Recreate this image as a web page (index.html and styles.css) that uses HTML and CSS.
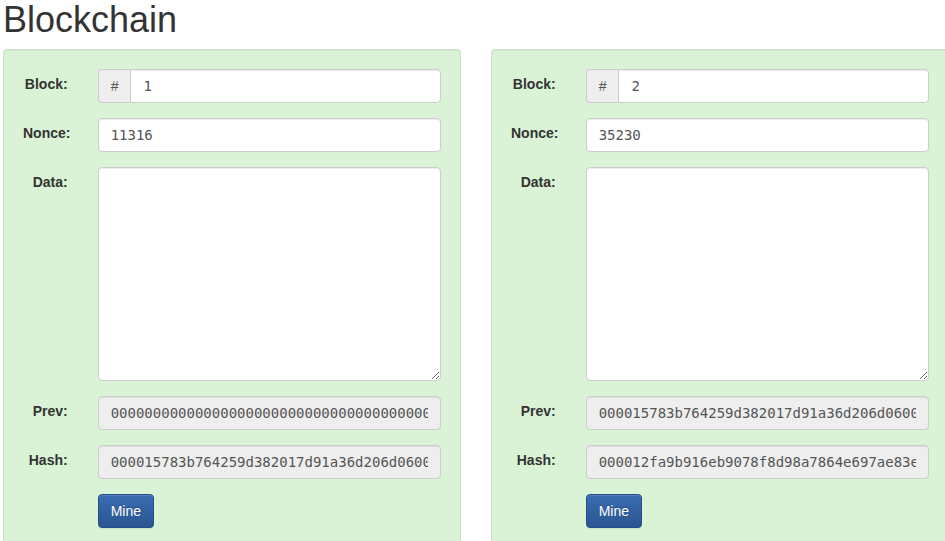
FILE: index.html
```html
<!DOCTYPE html>
<html lang="en">
<head>
<meta charset="utf-8">
<title>Blockchain</title>
<link rel="stylesheet" href="styles.css">
</head>
<body>
<div class="page">
  <h1 class="title">Blockchain</h1>
  <div class="chain">
    <div class="well">
      <form class="block-form">
        <div class="form-group">
          <label class="control-label">Block:</label>
          <div class="field">
            <div class="input-group">
              <span class="addon">#</span>
              <input class="form-control grouped" type="text" value="1">
            </div>
          </div>
        </div>
        <div class="form-group">
          <label class="control-label">Nonce:</label>
          <div class="field"><input class="form-control" type="text" value="11316"></div>
        </div>
        <div class="form-group">
          <label class="control-label">Data:</label>
          <div class="field"><textarea class="form-control area" rows="10"></textarea></div>
        </div>
        <div class="form-group">
          <label class="control-label">Prev:</label>
          <div class="field"><input class="form-control readonly" type="text" disabled value="0000000000000000000000000000000000000000000000000000000000000000"></div>
        </div>
        <div class="form-group">
          <label class="control-label">Hash:</label>
          <div class="field"><input class="form-control readonly" type="text" disabled value="000015783b764259d382017d91a36d206d0600e2cbb3567748f46a33fe9297cf"></div>
        </div>
        <div class="form-group">
          <div class="control-label"></div>
          <div class="field"><button class="btn-primary" type="button">Mine</button></div>
        </div>
      </form>
    </div>
    <div class="well">
      <form class="block-form">
        <div class="form-group">
          <label class="control-label">Block:</label>
          <div class="field">
            <div class="input-group">
              <span class="addon">#</span>
              <input class="form-control grouped" type="text" value="2">
            </div>
          </div>
        </div>
        <div class="form-group">
          <label class="control-label">Nonce:</label>
          <div class="field"><input class="form-control" type="text" value="35230"></div>
        </div>
        <div class="form-group">
          <label class="control-label">Data:</label>
          <div class="field"><textarea class="form-control area" rows="10"></textarea></div>
        </div>
        <div class="form-group">
          <label class="control-label">Prev:</label>
          <div class="field"><input class="form-control readonly" type="text" disabled value="000015783b764259d382017d91a36d206d0600e2cbb3567748f46a33fe9297cf"></div>
        </div>
        <div class="form-group">
          <label class="control-label">Hash:</label>
          <div class="field"><input class="form-control readonly" type="text" disabled value="000012fa9b916eb9078f8d98a7864e697ae83ed54f5146bd84452cdafd043c19"></div>
        </div>
        <div class="form-group">
          <div class="control-label"></div>
          <div class="field"><button class="btn-primary" type="button">Mine</button></div>
        </div>
      </form>
    </div>
  </div>
</div>
</body>
</html>
```
FILE: styles.css
```css
* {
  box-sizing: border-box;
}

html, body {
  margin: 0;
  padding: 0;
  overflow: hidden;
  background: #fff;
}

body {
  font-family: "Liberation Sans", Arial, sans-serif;
  font-size: 14px;
  line-height: 1.42857;
  color: #333;
}

.page {
  padding: 0 3px;
}

.title {
  margin: 0 0 9px;
  font-size: 36px;
  font-weight: 400;
  line-height: 1.1;
  color: #333;
}

.chain {
  display: flex;
  flex-wrap: nowrap;
  gap: 30px;
}

.well {
  flex: 0 0 458px;
  width: 458px;
  padding: 19px;
  background: #daf3d6;
  border: 1px solid #d3ddd0;
  border-radius: 4px;
  box-shadow: inset 0 1px 1px rgba(0, 0, 0, 0.05);
}

.block-form {
  margin: 0;
}

.form-group {
  display: flex;
  margin: 0 -15px 15px;
}

.control-label {
  flex: 0 0 16.66667%;
  width: 16.66667%;
  padding: 6px 15px 0;
  text-align: right;
  font-weight: 700;
  white-space: nowrap;
}

.field {
  flex: 0 0 83.33333%;
  width: 83.33333%;
  padding: 0 15px;
}

.input-group {
  display: flex;
}

.addon {
  flex: 0 0 auto;
  padding: 6px 12px;
  font-size: 14px;
  line-height: 20px;
  height: 34px;
  color: #555;
  background: #eee;
  border: 1px solid #ccc;
  border-right: 0;
  border-radius: 4px 0 0 4px;
}

.form-control {
  display: block;
  width: 100%;
  height: 34px;
  padding: 6px 12px;
  font-family: "DejaVu Sans Mono", monospace;
  font-size: 14px;
  line-height: 20px;
  color: #555;
  background: #fff;
  border: 1px solid #ccc;
  border-radius: 4px;
  box-shadow: inset 0 1px 1px rgba(0, 0, 0, 0.075);
  margin: 0;
  outline: none;
}

.grouped {
  flex: 1 1 auto;
  min-width: 0;
  border-radius: 0 4px 4px 0;
}

.area {
  height: auto;
  resize: vertical;
}

.readonly {
  background: #eee;
  color: #555;
  opacity: 1;
  -webkit-text-fill-color: #555;
}

.btn-primary {
  display: inline-block;
  height: 34px;
  padding: 6px 12px;
  font-family: "Liberation Sans", Arial, sans-serif;
  font-size: 14px;
  line-height: 20px;
  color: #fff;
  background-color: #2b5a94;
  background-image: linear-gradient(to bottom, #3a6cb3 0, #2a5690 100%);
  border: 1px solid #26508a;
  border-radius: 4px;
  text-shadow: 0 -1px 0 rgba(0, 0, 0, 0.2);
  box-shadow: inset 0 1px 0 rgba(255, 255, 255, 0.15), 0 1px 1px rgba(0, 0, 0, 0.075);
  cursor: pointer;
}
```
